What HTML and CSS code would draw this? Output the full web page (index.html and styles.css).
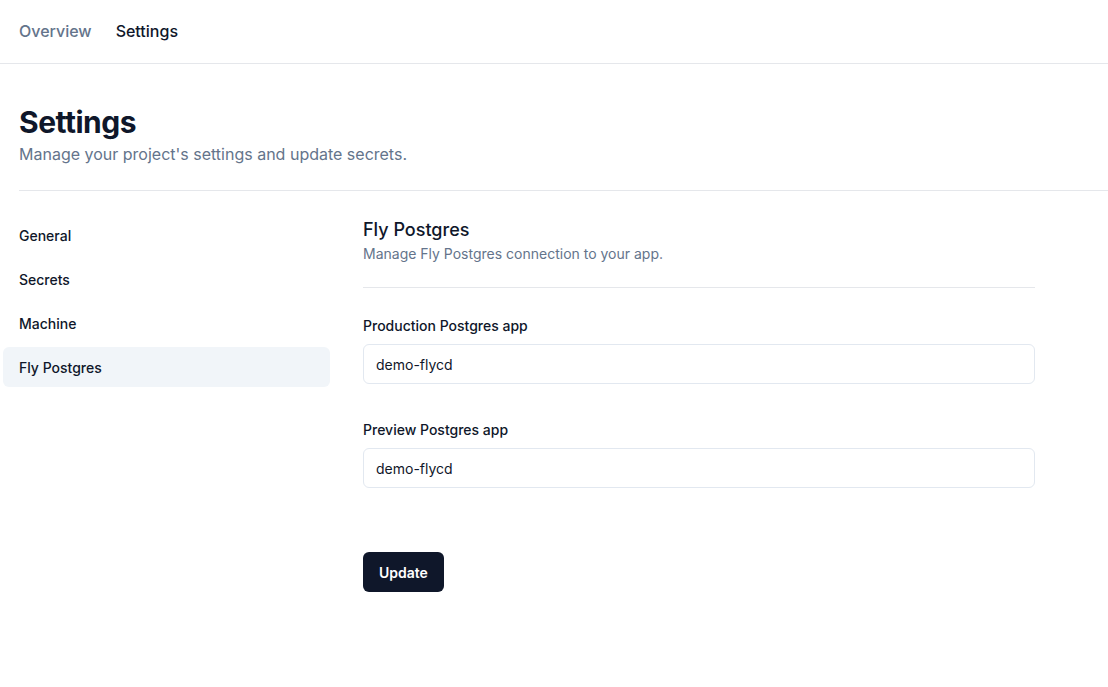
FILE: index.html
```html
<!DOCTYPE html>
<html>
<head>
<meta charset="utf-8">
<link rel="stylesheet" href="styles.css">
</head>
<body>
<header class="topnav">
  <a class="tab muted">Overview</a>
  <a class="tab active">Settings</a>
</header>
<main class="page">
  <section class="page-head">
    <h1>Settings</h1>
    <p>Manage your project's settings and update secrets.</p>
  </section>
  <div class="layout">
    <nav class="sidenav">
      <a class="side-item">General</a>
      <a class="side-item">Secrets</a>
      <a class="side-item">Machine</a>
      <a class="side-item selected">Fly Postgres</a>
    </nav>
    <section class="content">
      <div class="content-head">
        <h2>Fly Postgres</h2>
        <p>Manage Fly Postgres connection to your app.</p>
      </div>
      <form class="form">
        <div class="field">
          <label>Production Postgres app</label>
          <input type="text" value="demo-flycd">
        </div>
        <div class="field">
          <label>Preview Postgres app</label>
          <input type="text" value="demo-flycd">
        </div>
        <button type="button" class="btn">Update</button>
      </form>
    </section>
  </div>
</main>
</body>
</html>
```

FILE: styles.css
```css
* { box-sizing: border-box; }
html, body { margin: 0; padding: 0; background: #fff; }
body {
  font-family: Inter, "Noto Sans", sans-serif;
  color: #0f172a;
  -webkit-font-smoothing: antialiased;
}
.topnav {
  height: 64px;
  border-bottom: 1px solid #e5e7eb;
  display: flex;
  align-items: center;
  gap: 24px;
  padding: 0 19px 2px;
}
.tab {
  font-size: 16px;
  font-weight: 500;
  line-height: 24px;
}
.tab.muted { color: #64748b; }
.tab.active { color: #0f172a; }

.page { padding: 0 0 0 19px; }
.page-head {
  padding-top: 40px;
  padding-bottom: 24px;
  border-bottom: 1px solid #e5e7eb;
}
.page-head h1 {
  margin: 0;
  font-size: 30px;
  font-weight: 700;
  line-height: 36px;
  letter-spacing: -0.5px;
}
.page-head p {
  margin: 2px 0 0;
  font-size: 16px;
  line-height: 24px;
  color: #64748b;
}

.layout {
  display: flex;
  gap: 33px;
  padding-top: 24px;
  padding-right: 73px;
}
.sidenav {
  width: 327px;
  margin-left: -16px;
  display: flex;
  flex-direction: column;
  gap: 4px;
  flex-shrink: 0;
}
.side-item {
  height: 40px;
  padding: 0 16px;
  display: flex;
  align-items: center;
  font-size: 14px;
  font-weight: 500;
  border-radius: 6px;
  color: #0f172a;
}
.side-item.selected { background: #f1f5f9; }

.content { flex: 1; padding-top: 1px; }
.content-head {
  padding-bottom: 23px;
  border-bottom: 1px solid #e5e7eb;
}
.content-head h2 {
  margin: 0;
  font-size: 18px;
  font-weight: 500;
  line-height: 28px;
}
.content-head p {
  margin: 0;
  font-size: 14px;
  line-height: 20px;
  color: #64748b;
}
.form { display: flex; flex-direction: column; padding-top: 28px; }
.field { display: flex; flex-direction: column; gap: 8px; margin-bottom: 36px; }
.field label {
  font-size: 14px;
  font-weight: 500;
  line-height: 20px;
}
.field input {
  height: 40px;
  border: 1px solid #e2e8f0;
  border-radius: 6px;
  padding: 0 12px;
  font-family: inherit;
  font-size: 14px;
  color: #0f172a;
  background: #fff;
  outline: none;
}
.btn {
  margin-top: 28px;
  align-self: flex-start;
  height: 40px;
  padding: 0 16px;
  background: #0f172a;
  color: #fff;
  border: none;
  border-radius: 6px;
  font-family: inherit;
  font-size: 14px;
  font-weight: 600;
}
```
